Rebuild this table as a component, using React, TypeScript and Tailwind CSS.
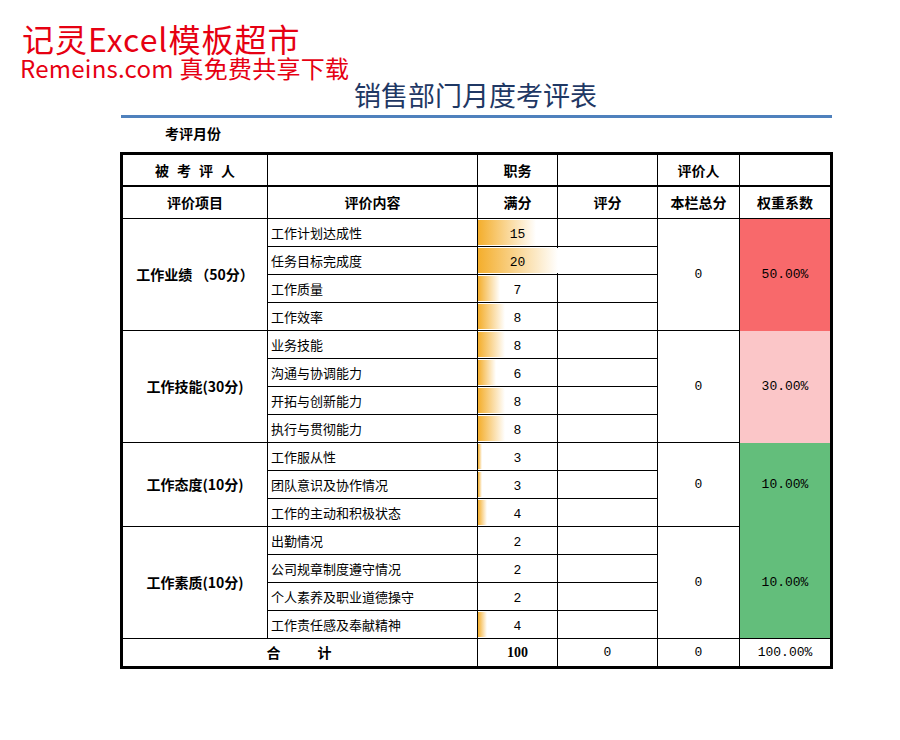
import React from "react";

type Item = [string, number];
type Group = { label: string; weight: string; color: string; items: Item[] };

const groups: Group[] = [
  {
    label: "工作业绩 （50分）",
    weight: "50.00%",
    color: "bg-[#f8696b]",
    items: [
      ["工作计划达成性", 15],
      ["任务目标完成度", 20],
      ["工作质量", 7],
      ["工作效率", 8],
    ],
  },
  {
    label: "工作技能(30分)",
    weight: "30.00%",
    color: "bg-[#fbc6c8]",
    items: [
      ["业务技能", 8],
      ["沟通与协调能力", 6],
      ["开拓与创新能力", 8],
      ["执行与贯彻能力", 8],
    ],
  },
  {
    label: "工作态度(10分)",
    weight: "10.00%",
    color: "bg-[#63be7b]",
    items: [
      ["工作服从性", 3],
      ["团队意识及协作情况", 3],
      ["工作的主动和积极状态", 4],
    ],
  },
  {
    label: "工作素质(10分)",
    weight: "10.00%",
    color: "bg-[#63be7b]",
    items: [
      ["出勤情况", 2],
      ["公司规章制度遵守情况", 2],
      ["个人素养及职业道德操守", 2],
      ["工作责任感及奉献精神", 4],
    ],
  },
];

const spanClass: Record<number, string> = {
  3: "row-span-3",
  4: "row-span-4",
};

const cjk = "font-['Noto_Sans_CJK_SC',sans-serif]";
const mono = "font-['Liberation_Mono',monospace]";

function Bar({ v }: { v: number }) {
  const w = Math.max(0, ((v - 2) / 18) * 80);
  return (
    <div
      className="absolute left-0 top-[1px] bottom-[1px] bg-[linear-gradient(to_right,#f4ae2c,#ffffff)]"
      style={{ width: `${w}px` }}
    />
  );
}

export default function App() {
  const cell = "border-r border-b border-black flex items-center";
  return (
    <div className={`relative w-[900px] h-[740px] bg-white text-black ${cjk}`}>
      {/* watermark */}
      <div className="absolute left-[20px] top-[23px] text-[#e60012]">
        <div className="text-[32px] leading-[31px] pl-[2px] tracking-[1px]">记灵Excel模板超市</div>
        <div className="mt-[2px] text-[24px] leading-[23px] tracking-[0.25px]">Remeins.com 真免费共享下载</div>
      </div>

      <div className="ml-[120px] w-[713px] pt-[82px]">
        <div className="text-center text-[27px] leading-[26px] text-[#1f3864] pr-[2px]">
          销售部门月度考评表
        </div>
        <div className="mt-[7px] ml-[1px] w-[711px] h-[3px] bg-[#4f81bd]" />
        <div className="mt-[8px] pl-[45px] text-[14px] leading-[14px] font-bold">考评月份</div>

        <div className="mt-[12px] border-[3px] border-black">
          <div className="grid grid-cols-[145px_210px_80px_100px_82px_90px] grid-rows-[32px_32px_repeat(15,28px)_27px] text-[14px]">
            {/* header row 1 */}
            <div className="border-r border-b-2 border-black flex items-center justify-center font-bold tracking-[8px] pl-[8px]">
              被考评人
            </div>
            <div className="border-r border-b-2 border-black" />
            <div className="border-r border-b-2 border-black flex items-center justify-center font-bold">职务</div>
            <div className="border-r border-b-2 border-black" />
            <div className="border-r border-b-2 border-black flex items-center justify-center font-bold">评价人</div>
            <div className="border-b-2 border-black" />

            {/* header row 2 */}
            <div className={`${cell} justify-center font-bold`}>评价项目</div>
            <div className={`${cell} justify-center font-bold`}>评价内容</div>
            <div className={`${cell} justify-center font-bold`}>满分</div>
            <div className={`${cell} justify-center font-bold`}>评分</div>
            <div className={`${cell} justify-center font-bold`}>本栏总分</div>
            <div className="border-b border-black flex items-center justify-center font-bold">权重系数</div>

            {groups.map((g, gi) =>
              g.items.map((it, ii) => (
                <React.Fragment key={`${gi}-${ii}`}>
                  {ii === 0 && (
                    <div className={`${cell} ${spanClass[g.items.length]} justify-center font-bold`}>
                      {g.label}
                    </div>
                  )}
                  <div className={`${cell} pl-[3px] text-[13px]`}>{it[0]}</div>
                  <div className={`${cell} relative justify-center`}>
                    <Bar v={it[1]} />
                    <span className={`relative ${mono} text-[13px] pt-[4px]`}>{it[1]}</span>
                  </div>
                  <div className={`${cell}`} />
                  {ii === 0 && (
                    <div className={`${cell} ${spanClass[g.items.length]} justify-center ${mono} text-[13px]`}>
                      0
                    </div>
                  )}
                  {ii === 0 && (
                    <div
                      className={`${spanClass[g.items.length]} ${g.color} ${
                        gi === groups.length - 1 ? "border-b border-black" : ""
                      } flex items-center justify-center ${mono} text-[13px]`}
                    >
                      {g.weight}
                    </div>
                  )}
                </React.Fragment>
              ))
            )}

            {/* total row */}
            <div className="col-span-2 border-r border-black flex items-center justify-center font-bold pr-[2px]">
              <span>合</span>
              <span className="ml-[37px]">计</span>
            </div>
            <div className="border-r border-black flex items-center justify-center font-bold font-['Liberation_Serif',serif] text-[14px]">
              100
            </div>
            <div className={`border-r border-black flex items-center justify-center ${mono} text-[13px]`}>0</div>
            <div className={`border-r border-black flex items-center justify-center ${mono} text-[13px]`}>0</div>
            <div className={`flex items-center justify-center ${mono} text-[13px]`}>100.00%</div>
          </div>
        </div>
      </div>
    </div>
  );
}
